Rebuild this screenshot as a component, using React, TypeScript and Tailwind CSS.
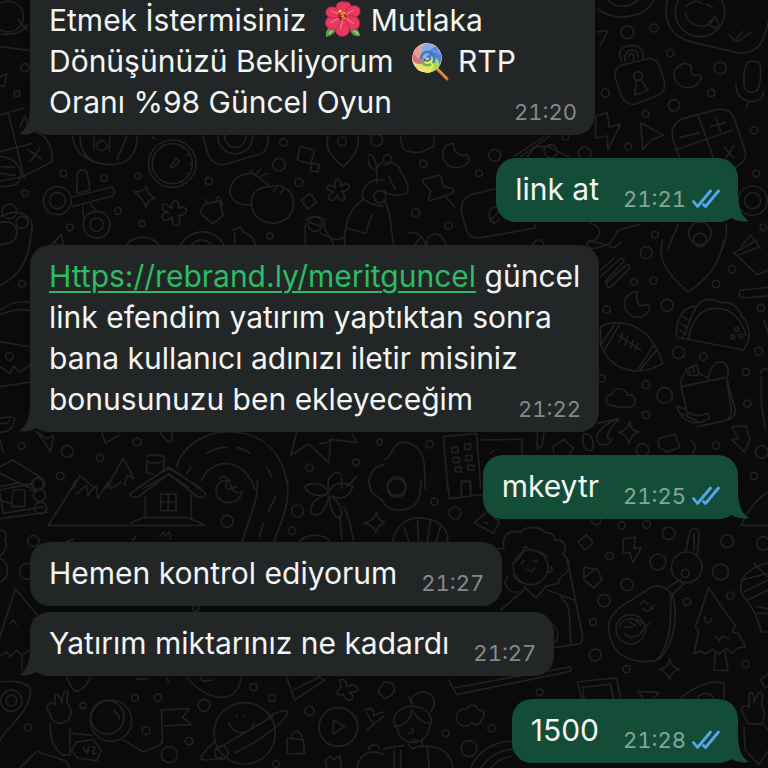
import type { ReactNode } from 'react';
import clsx from 'clsx';

// --- Types ---
interface Message {
  id: number;
  lines: ReactNode[];
  time: string;
  mine?: boolean;
  tail?: boolean;
  // continues above the top of the screen
  cut?: boolean;
  // follows a message of the same sender
  grouped?: boolean;
  width?: string;
}

// --- Emoji ---
const Hibiscus = () => (
  <svg viewBox="0 0 40 40" role="img" aria-label="hibiscus" className="inline-block w-[40px] h-[40px] mx-[8px] align-middle -mt-[4px]">
    <path d="M9 24c-5 3-7 8-6 12 4-1 9-3 10-8z" fill="#5f9a45" />
    <path d="M29 25c5 2 8 6 8 10-5 1-8-1-10-6z" fill="#5f9a45" />
    <path d="M6 33l5-6M35 33l-6-5" stroke="#b5cf83" strokeWidth="1.5" />
    <g fill="#e5395f" stroke="#b91f45" strokeWidth="0.7">
      <path d="M18 14C11 10 12 2 17 1c2-1 4 0 6 0 5 0 6 4 4 7-1 4-4 6-9 6z" />
      <path d="M20 14c3-7 9-11 14-9 4 2 4 7 1 10-4 4-10 4-15-1z" />
      <path d="M21 16c6-2 13-2 15 3 2 6-1 10-6 10-6-1-9-6-9-13z" />
      <path d="M19 17c5 3 9 9 7 14-2 5-9 6-12 2-4-5-1-12 5-16z" />
      <path d="M18 16c0 7-4 13-9 13-5-1-8-6-6-10 2-5 9-5 15-3z" />
      <path d="M18 15C12 18 5 18 3 13c-1-5 3-8 7-7 4 0 7 4 8 9z" />
    </g>
    <path d="M20 18l-3 10M23 17l8 6M22 14l9-5M16 17l-9 5M16 13L8 10" stroke="#f7708a" strokeWidth="1.3" fill="none" />
    <circle cx="19" cy="15" r="4" fill="#a5173a" />
    <path d="M21 18l-3-7" stroke="#f4b83f" strokeWidth="3" strokeDasharray="1.5 0.8" />
    <circle cx="17" cy="10" r="1.6" fill="#f9c64c" />
    <circle cx="21" cy="12" r="1.3" fill="#f2a23a" />
  </svg>
);

// candy arms, one for each eighth of the disc
const candy = ['#5b86dc', '#4f7fd8', '#a9d957', '#e4ec52', '#e9e06a', '#d96f86', '#e59a8c', '#86a9e8'];

const Lollipop = () => (
  <svg viewBox="0 0 40 40" role="img" aria-label="lollipop" className="inline-block w-[40px] h-[40px] mx-[8px] align-middle -mt-[4px]">
    <path d="M26 26l11 11" stroke="#c9702f" strokeWidth="3" strokeLinecap="round" />
    <path d="M26 25l11 11" stroke="#f0a25a" strokeWidth="1.2" strokeLinecap="round" />
    <clipPath id="candy-disc">
      <circle cx="17" cy="16" r="15" />
    </clipPath>
    <g clipPath="url(#candy-disc)">
      <g transform="translate(17 16)">
        <circle r="15" fill="#d9c36a" />
        {candy.map((color, i) => (
          <path
            key={i}
            d="M0 0C2-7 10-9 15-2L12 12C12 4 6-1 0 0z"
            transform={`rotate(${i * 45 - 45})`}
            fill={color}
            stroke="#f1efd8"
            strokeOpacity="0.55"
            strokeWidth="0.6"
          />
        ))}
        <path d="M-6 1c0-5 4-8 8-7 5 1 7 7 4 11" stroke="#3f78cf" strokeWidth="2.4" fill="none" />
        <path d="M-6 1c0 5 6 8 10 5" stroke="#6fb04c" strokeWidth="2.4" fill="none" />
        <path d="M0 0c1-3 4-1 3 1-1 3-6 2-6-1" stroke="#3566b5" strokeWidth="1.6" fill="none" />
      </g>
    </g>
  </svg>
);

// --- Dummy Data ---
const messages: Message[] = [
  {
    id: 1,
    lines: [
      <>Etmek İstermisiniz <Hibiscus />Mutlaka</>,
      <>Dönüşünüzü Bekliyorum <Lollipop />RTP</>,
      'Oranı %98 Güncel Oyun',
    ],
    time: '21:20',
    tail: true,
    cut: true,
    width: 'w-[565px]',
  },
  { id: 2, lines: ['link at'], time: '21:21', mine: true, tail: true },
  {
    id: 3,
    lines: [
      <>
        <a href="https://rebrand.ly/meritguncel" className="text-[#2dbb63] underline decoration-2 underline-offset-4">Https://rebrand.ly/meritguncel</a> güncel
      </>,
      'link efendim yatırım yaptıktan sonra',
      'bana kullanıcı adınızı iletir misiniz',
      'bonusunuzu ben ekleyeceğim',
    ],
    time: '21:22',
    tail: true,
    width: 'w-[569px]',
  },
  { id: 4, lines: ['mkeytr'], time: '21:25', mine: true, tail: true },
  { id: 5, lines: ['Hemen kontrol ediyorum'], time: '21:27' },
  { id: 6, lines: ['Yatırım miktarınız ne kadardı'], time: '21:27', tail: true, grouped: true },
  { id: 7, lines: ['1500'], time: '21:28', mine: true, tail: true },
];

// --- Wallpaper ---
interface Tile {
  x: number;
  y: number;
  dots: number[][];
  paths: string[];
}

// every tile is drawn on a 3x grid, dots are [cx, cy, r]
const tiles: Tile[] = [
  {
    x: 0,
    y: 0,
    dots: [
      [75, 203, 12], [51, 281, 9], [190, 520, 10], [312, 535, 10], [414, 528, 9], [75, 580, 10], [354, 633, 10], [209, 682, 10],
      [426, 671, 9], [837, 494, 19], [850, 427, 11], [897, 547, 12], [627, 543, 11], [809, 708, 9], [172, 602, 42], [172, 602, 24],
      [290, 674, 40], [290, 674, 20], [517, 491, 71], [517, 491, 60], [706, 410, 52], [706, 410, 32], [306, 437, 15], [1026, 424, 13],
      [28, 634, 22], [66, 667, 18], [1130, 420, 18], [24, 50, 46], [1140, 590, 18], [945, 672, 22],
    ],
    paths: [
      'M0 102c40 4 70-6 82-28M55 60l26 30M0 140l92 12M0 230l20-8-8 38-12-4',
      'M0 345l70-20M25 340l48 195M0 455l95-24M100 395c40 5 60 50 56 90l-90 46-66 12M85 450l38 26M120 445l-30 40',
      'M0 470c40 0 66 30 62 60s-30 28-62 30M4 500l40 2M0 520l46 6',
      'M0 650c60-30 100 0 96 36l-10 64M0 668c30-8 52 4 50 32s-20 30-50 34',
      'M218 408c4 60 60 86 118 86 50 0 76-36 76-86M240 410c2 40 14 60 36 70M282 410v40M330 410l-2 44M350 480l30-70',
      'M232 520c8-14 26-16 30 0l8 50-40 10zM214 592l118-30c14 0 14 22 4 26l-118 32M248 620l4 40M270 612l22 24',
      'M510 500l18-24 10 8-20 20zM545 440l6 4M560 465l6 2M568 492h8M560 520l6 4M540 545l6 4',
      'M608 408l18 60c10 20 30 30 54 24l100-30c18-6 26-28 24-54',
      'M900 440l44 10-12 42-40-12zM936 490l22 4-4 22-22-4zM984 408c-10 40 10 62 46 92 30-30 50-50 44-92',
      'M402 574c20 4 32-4 38-14 2 20 10 30 26 34-18 4-26 14-28 28-6-18-14-32-36-48z',
      'M520 604c10-8 20 4 14 20 14-6 30 0 24 14-6 10-18 8-24 8 10 12 8 30-6 32-12 0-10-18-12-28-10 12-26 16-30 2-2-12 10-16 20-14-14-4-22-12-18-22 8-8 20 0 26 10 0-8 2-16 6-22z',
      'M612 614l46-12 12 44-32 26-38-34zM622 610l-6-12M650 602c-4-10 8-14 12-4l6 16',
      'M760 520c-40 0-70 20-70 56 4 30 30 42 62 38M756 590c-10 50 20 76 66 80 40-4 62-30 58-70-8-36-40-50-66-40-32 0-50 12-58 30zM745 520l14-12M765 525l18-18M780 530l22-10M810 560c-20-20-34-26-50-40M820 575l10-14M840 580l12-14',
      'M1008 540c10-8 16 4 14 20 12-12 28-10 26 2-4 8-14 12-24 12 10 8 14 22 4 28-10 0-14-10-16-18-6 14-16 22-24 14-4-10 4-18 14-24-14 0-22-6-20-14 6-8 18-2 24 4-2-8-2-18 2-24z',
      'M904 600l26-20 20 26-26 22z',
      'M1105 470c10-18 22 10 26 36 10-20 20-24 21-18M1104 480c2 20 14 30 26 30v38M1152 540c-40-6-70 20-64 54 20 20 40 20 64 26M1088 600c-30 20-46 50-50 84l60 16c4-20 12-40 18-56M1036 688c-4 24-4 40 2 58M960 700l50 20 26-10',
      'M916 660c2-12 56-12 58 0v28l20 30c6 10 6 20 4 30M916 672v76M930 668l30 10M140 750l44-46 6 36M160 726l24 12',
      'M375 742c20-40 86-40 106 0M536 742c40-64 110-60 140 0M570 742c20-30 50-30 70 0M700 690l20-10 12 18c30 10 34 30 34 50M704 700v44',
      'M60 380l14-32 10 30M455 412l10 4',
    ],
  },
  {
    x: 384,
    y: 0,
    dots: [
      [810, 84, 12], [730, 97, 19], [859, 159, 11], [1009, 204, 18], [664, 279, 12], [870, 316, 17], [785, 341, 10], [981, 279, 11],
      [1110, 391, 11], [733, 440, 10], [332, 466, 18], [118, 491, 11], [602, 460, 19], [285, 520, 10], [95, 638, 12], [193, 677, 11],
      [1117, 520, 10], [1106, 602, 44], [1106, 602, 24], [1138, 682, 10], [813, 704, 10], [948, 700, 34], [948, 36, 74],
      [762, 228, 13], [500, 454, 20], [10, 476, 12], [545, 410, 10],
    ],
    paths: [
      'M640 26c50 40 140 30 170-26M672 0c20 24 60 26 90 0',
      'M850 0c-14 70 10 110 80 128l130 30c50 6 80-20 92-90M905 20c20-20 40-20 50-8M965 12l20 10M905 40c10 50 80 50 86 10M975 66l20-14 10 24c-10 14-26 6-30-10zM1036 105l16 18 24-28M1056 120l6 4 40-28',
      'M640 96l32-4-24 46',
      'M712 184c-14-30 0-46 30-48 30 0 36 16 36 40M724 184c-4-22 4-32 18-34 14 0 20 8 20 22M735 170c0-10 14-14 14-4v18',
      'M712 196l80-20c20-2 30 8 36 24l14 50c2 20-6 32-26 38l-60 24c-24 4-36-8-42-22l-20-56c-4-20 4-32 18-38zM758 240l-6 46 40-16-24-34',
      'M904 190c-30 6-40 30-30 50 14 30 60 34 80-8l-10-8c-14 8-28 0-22-26z',
      'M1090 188c6-6 30-4 36 0 8 20 4 60-4 80-10 14-34 10-40-2-6-20-2-58 8-78zM1056 250c0 40 20 54 50 54 20 0 30-14 34-26M1094 306l-6 14',
      'M636 348l34-10 6 44 34-10-38 76-2-40-36 6zM770 368l68 38-36 14-26 28z',
      'M870 380c6-16 20-22 40-28l90-24c30-4 44 8 52 30l32 96c4 20-10 40-30 48M870 380c-10 14-8 30 2 54l14 36M943 348l44 122M874 450l172-60M890 412l56-14M980 380l44-12M996 352l14 42M1020 440l30 34M1050 438l-26 40',
      'M390 470l90-60M410 470l86-60M430 470l24-30h40l60 30M50 410l4 30c10 16 30 20 60 16l36-18v-28',
      'M208 430c-30 4-36 24-30 46 14 34 62 36 78 4l-6-16c-18 8-42-4-42-34z',
      'M150 530c14-8 26-4 22 8l6 22 26 6c10 6 4 14-4 16l-54 18c-12 4-16-4-10-10l4-18-20-22c-8-10 0-14 8-14zM184 590l28 30',
      'M0 496l24-8 20 12c10 30 30 40 28 70 0 20-60 20-72 0M14 530l20 40',
      'M346 564l-76 18c-30 8-42 30-36 60l14 50c8 20 24 26 50 20l156-28v-12M346 620c-30 0-36 20-26 40l30-30M346 660c-16 14-28 10-30-8',
      'M0 600c20 30 20 80 30 146M76 700c20-10 44 10 50 40M130 740c-6-40 30-50 50-20l10 24M90 740l20-30M445 735c10-20 30-20 36 0',
      'M620 670c40 10 34 50-12 60 0 20 30 20 70 0l26-40 60-16M882 674l-30 72M1026 670c4 30-2 60-10 76M1070 740l30-34 30 40',
    ],
  },
  {
    x: 0,
    y: 240,
    dots: [
      [66, 131, 10], [28, 350, 11], [64, 618, 10], [202, 634, 18], [300, 654, 11], [411, 606, 12], [181, 708, 11], [1068, 667, 10],
      [929, 683, 11], [116, 730, 18],
    ],
    paths: [
      'M92 0c-10 70-40 110-92 136M0 210c30-20 60-30 92-22M0 225c30-14 60-20 90-14M0 305l92 16M0 380l28 20 14-22 16 20 30-22M0 440l92-14M0 535c20-6 40-4 44 0-4 34-20 40-44 42M0 550c14 4 24-2 30-10M0 600l10 40',
      'M110 576l30 20 20-10-8 50-18-30zM306 578l10 32 40-24M480 578l20 24c16 14 18-10 16-24',
      'M0 680l38-20 90 56M0 700l90 44M0 740l60-12',
      'M530 680c20-70 100-110 170-104 90 6 150 60 164 170M605 720c30-70 130-70 160 30M560 700c6-6 10-14 12-20M620 640c20-14 40-18 60-18M710 622c20 4 30 10 40 18M800 680l14 30M660 720c0-20 30-10 20 10s10 20 30 10',
      'M410 744l96-60 96 60M430 746l76-44 60 40M440 650c0-8 54-8 54 6s-54 18-54 6v36l20 4M440 670v28M494 664l-4 20',
      'M320 746l50-92 32 62-20-10-8 30M220 746l20-40 40 36',
      'M890 578l-18 68 54-34 60 56 6-70 80 10-16-28M960 610c14 2 24-2 34-12M1130 610c0-14 14-20 16-6s-10 14-16 6zM1110 740c-10-30 10-60 42-66M985 746c-6-40 26-60 40-40v40M1040 740l30-30',
    ],
  },
  {
    x: 384,
    y: 240,
    dots: [
      [787, 38, 18], [1044, 88, 11], [996, 132, 11], [750, 125, 10], [808, 122, 11], [849, 196, 18], [668, 208, 11], [1131, 204, 11],
      [884, 338, 18], [958, 350, 11], [1124, 334, 12], [1086, 396, 11], [786, 434, 12], [842, 466, 23], [1090, 491, 11], [786, 525, 11],
      [652, 416, 11], [996, 617, 11], [1133, 636, 19], [137, 613, 11], [1110, 708, 11], [776, 630, 19], [38, 738, 28], [948, 0, 20],
      [1058, 268, 6], [1046, 290, 6], [1070, 288, 6],
    ],
    paths: [
      'M836 0c-14 50 0 90 76 156 60-40 100-90 106-156',
      'M1050 38l70-38M1050 38l70 66 32-14M1066 44l60-24M1070 150l82-8M1070 150c-10 12-2 22 10 24l72-6M1140 240l12 40',
      'M650 110l60-54c8-4 12 4 8 10l-56 60M670 126l56-50c10-4 14 4 10 10l-54 54c-12 6-18-4-12-14M650 90l40-36M610 0l40 10 40 14 20-16',
      'M760 155c-36 4-44 30-36 50 20 40 64 34 74-4l-8-8c-26 12-36-4-30-38z',
      'M650 258c60-24 150-8 186 112-60 40-160 30-186-60zM690 256l-40 60M706 254l-44 76M818 330l-48 58M808 316l-44 70M704 286l66 44M716 280l-10 26M732 288l-10 28M748 300l-8 24M762 310l-8 20',
      'M878 290c-6-60 30-96 60-90 14-26 50-26 70-12 40-6 60 20 66 44 20 10 22 40 20 70l-14 28-190-36c-10 0-12-2-12-4zM912 300c10-60 40-100 90-94 40 0 70 30 84 80M896 290c14-10 20-60 40-86M886 270l20 14M890 250l20 14M896 230l20 12',
      'M904 390l34-16 8 28c-6 4-30 8-34 0zM914 384l4 14M926 380l4 16M900 402c-10 20-10 20-8 40l20 90M892 440l136-28 14 100c0 20-10 28-26 32l-76 16M946 402l26 10M972 418c4-40 30-60 48-50 14 10 16 30 8 46l26 96c0 24-20 30-40 34M880 500c10 50 60 60 98 34l-6-14c-30 14-60 4-70-14zM890 520l50 24',
      'M680 496c-20-6-16-34 4-32 6-26 44-20 46 2 20-6 30 16 18 32-20 6-50 4-68-2z',
      'M738 544c0 20 8 28 28 32-20 6-28 14-30 36-8-20-14-30-32-34 20-6 28-14 34-34z',
      'M704 536c-40 14-70 40-66 64 10 24 40 14 46-2-20 4-20-20 20-60M600 580c-10 20 0 60 24 50 10-20 0-50-24-50zM640 550l60-14',
      'M824 596l48-14 16 40-40 14-24-16zM506 620l32-22 30 26-10 18M510 640l-4-20M920 600c16 10 16 30 6 40M1046 560l40-2 12 40-16 38-38-36 20-4-20-34',
      'M178 590l14 160M178 590l100-10 12 166M290 600l124-2v44M320 640l10-8M204 622h18v16h-18zM242 612h18v16h-18zM208 652h18v16h-18zM246 646h18v16h-18zM214 682h18v14h-18zM252 676h18v14h-18zM234 724h24v24',
      'M0 660c30-10 20-60 70-52 60 20 50 60 54 140M460 578v50l14-10 6-40M1130 400c0-16 14-16 22-10M1132 410v80l12 80',
    ],
  },
  {
    x: 0,
    y: 480,
    dots: [
      [682, 124, 18], [893, 93, 18], [876, 152, 11], [100, 183, 17], [82, 274, 24], [587, 385, 9], [405, 653, 10], [473, 653, 11],
      [612, 676, 18], [249, 677, 9], [84, 743, 11], [438, 752, 12], [567, 783, 11], [760, 621, 11], [816, 654, 11], [929, 693, 14],
      [664, 818, 20], [34, 662, 32], [34, 662, 16], [333, 722, 62], [322, 712, 50], [734, 760, 92], [1015, 741, 58], [828, 852, 10],
      [508, 824, 24], [118, 46, 18], [122, 84, 18], [112, 12, 18],
    ],
    paths: [
      'M0 30l100-20M0 40l10 60 120-20M40 30h34v50h-40zM90 30l20 4M0 116l144-20M0 60l30 10M144 136c40-60 60-90 84-136M144 136l470 0M390 130l40-18h130l50 20M230 40l30-24 4 30 24-30 6 40 30-50 10 20 30-20',
      'M390 42l116-82 112 80c-4 12-16 16-28 8l-84-66-88 66c-14 6-26 4-28-6zM436 50v66M574 44v72M482 42h46v50h-46zM505 42v50M482 66h46',
      'M690 0c-36 0-50 24-38 48 14 30 66 26 74-12-20 8-36-6-36-36zM772 0c6 60-30 120-44 184M862 0c10 70-20 130-40 184M826 50l-20 44M790 130l-12 40',
      'M984 40c-10-40-60-30-70-20 10 26 40 30 70 22-40 10-60 40-48 60 24 10 40-10 52-56 0 30 10 60 30 70 16-20 0-50-24-68 30 14 60 0 64-30-30-16-60-10-74 22zM1020 110l6 70M1030 80c20 30 24 70 30 100M900 184c20-24 70-24 90 0M1130 96c2 20 10 28 24 30M1130 96c-6 20-16 26-38 34 20 4 32 10 36 28 4-16 10-26 24-28M1105 0l10 36 37 30',
      'M0 150c20 0 20 20 14 30 10 10 6 30-14 50M0 236c30 10 30 60 0 70M480 170l10-14 6 12 12-12 4 20M200 184l20-6M400 180l6-10',
      'M0 470l46-144 70 84-20 10M30 430l10-10 10 14M0 528l20-12 10 14 20-20 16 16 20-14M66 530v40',
      'M0 606c40-6 80 0 92 20 0 60-50 100-76 130l-16 24M200 594c10 20 20 40 34 40 20-10 34-30 36-42',
      'M150 700c-20-20 0-40 16-26-6-30 4-40 14-20l6 14c0-30 12-40 18-34l-4 36c14 10 18 30 6 50l-24 10c-20 0-28-10-32-30zM150 730c0 60 20 84 40 96l20-2v-80M216 760l60 6M60 864l50-50 90 30 8 20M370 780l60 36 50-20 8-20',
      'M482 690l86-4-20 26 26 22-80 4M484 690l4 100M230 786l50-8 24 34-14 30-58-8-18-24zM250 800l4 14 14-2M266 798l-4 22M276 802c10-4 12 4 4 10l-2 10 12-2M340 690c10 8 16 14 18 26M1000 720v42l34-22z',
      'M688 728c10 40 66 40 74 0M710 706v6M732 702v6M806 710c20-14 50-20 58-16-4 30-100 100-160 124M644 786c-24 20-44 44-40 52 20 6 40 0 60-6M650 808l170-100',
      'M862 774l48 6 4 40-52 2zM874 774c0-24 30-30 32 4M560 592c60 70 150 90 164 0M600 592l8 12 30-4M860 592l24 68 90-60-20-10M880 630l80-40M410 598l30-2M500 596l6 10',
      'M1020 600c16-6 20 10 20 20 20-10 30-4 34 8-6 10-16 10-26 8 14 10 14 20 0 26-10-4-16-14-18-20-14 8-24-2-16-10l10-12zM1150 610c-20 20-20 30 0 40M1096 690c20-10 30 0 24 16l30-10M1100 750l50-40M1100 700l20 30M976 840l16-10 8 10 20-12 4 36M980 864l-4-24M1072 864c4-40 40-60 80-40M1106 810c0-20 30-20 32-4',
    ],
  },
  {
    x: 384,
    y: 480,
    dots: [
      [151, 65, 11], [213, 99, 18], [713, 136, 11], [788, 134, 11], [854, 160, 19], [1030, 184, 19], [1138, 190, 20], [677, 228, 11],
      [822, 246, 24], [1010, 276, 24], [729, 314, 18], [1039, 347, 11], [660, 362, 18], [909, 365, 11], [627, 426, 10], [634, 525, 18],
      [728, 567, 11], [1085, 552, 11], [467, 637, 10], [185, 760, 10], [323, 745, 11], [255, 806, 24], [740, 448, 44], [440, 262, 52],
      [637, 120, 14], [38, 24, 28], [908, 262, 46], [904, 280, 12],
    ],
    paths: [
      'M0 70c20 30 90 30 106-20l6-50M190 0l6 56 110-14M232 48V4h28v40M270 128l40-34 36 32-18 34zM300 126l10 4',
      'M26 184c10-60 60-80 110-66 40 8 60 40 54 68M60 140l14 44M100 120l4 64M140 118l-10 66M170 140l-14 44',
      'M340 206l20 0c-10-40 20-60 50-48 10-20 60-20 74 0 20-2 30 10 28 24 30-10 40 30 24 40 30 20 20 60-4 66l-10 22-40 10M372 290c-20 20 0 50 30 46M386 250c20-10 30-30 36-50 30 20 50 10 70 30M412 250l8-8M450 246l10-6M424 268l20 6 8-10M420 320l36 34 30-34M420 330l-70 60M490 330l80 30M530 350c20 20 26 40 26 54M550 240l46 230c0 20-4 20-20 24l-80 10M556 400l4 90M496 430c34 10 34 60 0 66M386 286l24 22M500 260c10 10 0 20-10 16',
      'M582 186l26-22 20 24-24 22zM600 262l40 6 14 30-24 26-30-24zM604 290l30-24M718 176l36-4-4 34 22-2-26 44-8-30h-20z',
      'M904 214c10-20 6-40 14-60 10-12 24-8 28 4l-6 66M930 160v50M890 298l-38 24M900 310l-40 40',
      'M790 330c20-20 50-14 66 6 10 20 2 40 4 60 0 60-10 110-44 146-60 10-120-10-134-60-20-50-4-80 40-110 30-16 40-26 68-42zM864 340c20 60 10 150-40 200M706 440c6-30 50-30 70-10M770 370c10-10 16-8 22 4M800 384l12-8M776 386c10 10 20 8 30 0M736 424l20 14M750 416l20 20M720 460c20 20 50 10 56-10l20-20M720 440l26 2',
      'M974 324l-40 118 10 14-14 66 20-8 16 8 20-14 20 14 20-16 20 14 14-16 24-4-20-40-20-4 10-20-30-40zM962 410c0 20 16 26 20 6M994 468l12 14 10-14 18 8M994 520l-4 50 42 2-8-54',
      'M1152 250c-60 10-90 50-80 90 20 30 40 40 60 116h20M1152 280l-80 20M1152 300l-74 36M1152 330l-60 30M1110 250l40 40M1120 380l32 6M1120 400h32',
      'M858 534c0 20 10 30 30 34-20 4-30 12-32 32-4-18-12-26-30-32 20-4 28-12 32-34z',
      'M194 600l24 44 340-70c6-8 0-16-6-12l-80 14M210 624l270-50M580 606l110-12c8 0 10 6 10 12l10 52M580 606l14 50M600 656l-4-34 84-10 8 44M760 634l66 4-20 20M766 640l10 14M890 656c30-30 90-60 130-46v46M940 656c10-20 40-20 50 0M1130 600l22-20M1130 600l10 20h12',
      'M1072 136c20-50 50-80 80-100M1072 136h80',
      'M0 606c40-4 44 40 0 50M74 652l14 20M80 668c0-20 20-34 44-32 30 10 34 40 16 60M30 724c0-60 110-60 112 0l-12 40c-20 30-60 30-82 4zM30 740c30 0 50-20 54-50 10 20 30 40 56 40M70 786l14 20 30-10v-20M0 806l60-10M110 800c60-6 90 20 96 60M30 810v54M50 810v54M130 806l6 58M74 760l14-4-4-12M84 780h16',
      'M224 730c-16-20 0-50 24-42 10-20 30-14 34 2 20-4 24 20 10 30-6 20-20 16-30 8-10 16-30 12-38 2z',
      'M260 864c20-50 70-80 120-80M290 864c20-30 50-54 96-56M320 864c20-20 30-30 60-34',
      'M1076 700c-10-20 10-30 20-16v-40c6-14 16-4 14 24l14-30c10-4 16 4 8 36 14 20 10 40 0 60l-40-4zM1080 740l4 70 40 44 28-40M1136 730l16 20',
    ],
  },
];

const Wallpaper = () => (
  <svg
    viewBox="0 0 768 768"
    preserveAspectRatio="xMidYMid slice"
    aria-hidden="true"
    className="absolute inset-0 w-full h-full pointer-events-none"
  >
    {tiles.map((tile) => (
      <g
        key={`${tile.x}-${tile.y}`}
        transform={`translate(${tile.x} ${tile.y}) scale(0.3333)`}
        fill="none"
        stroke="#212121"
        strokeWidth="5"
        strokeLinecap="round"
        strokeLinejoin="round"
      >
        {tile.dots.map(([cx, cy, r], i) => (
          <circle key={i} cx={cx} cy={cy} r={r} />
        ))}
        {tile.paths.map((d, i) => (
          <path key={i} d={d} />
        ))}
      </g>
    ))}
  </svg>
);

// --- Bubble parts ---
const ReadTicks = () => (
  <svg viewBox="0 0 28 20" fill="none" stroke="#57a5ec" strokeWidth="2.8" strokeLinecap="round" strokeLinejoin="round" role="img" aria-label="read" className="w-[28px] h-[20px] ml-[6px]">
    <path d="M1.500 12.500L5.500 17.500 18.500 2" />
    <path d="M11.500 15.500L13.500 17.500 26.500 2" />
  </svg>
);

const Tail = ({ mine }: { mine?: boolean }) => (
  <svg
    viewBox="0 0 32 28"
    aria-hidden="true"
    className={clsx('absolute bottom-0 w-[32px] h-[28px]', mine ? '-right-[11px] fill-[#144d37]' : '-left-[11px] -scale-x-100 fill-[#222627]')}
  >
    <path d="M21 0c0 13 3 22 11 27-6 1-12 0-18-3-4 3-9 4-14 4V0z" />
  </svg>
);

const Bubble = ({ message }: { message: Message }) => {
  const { lines, time, mine, tail, cut, grouped, width } = message;
  const last = lines.length - 1;

  return (
    <li className={clsx('flex', mine && 'justify-end', !cut && (grouped ? 'mt-[6px]' : 'mt-[23px]'))}>
      <div
        className={clsx(
          'relative max-w-full pl-[19px] pr-[18px] pb-[12px]',
          mine ? 'bg-[#144d37]' : 'bg-[#222627]',
          cut ? 'rounded-b-[20px]' : 'rounded-[20px] pt-[11px]',
          width,
        )}
      >
        {tail && <Tail mine={mine} />}
        {lines.slice(0, last).map((line, i) => (
          <p key={i} className="relative h-[41px] whitespace-nowrap">{line}</p>
        ))}
        <div className="relative flex justify-between gap-[24px]">
          <p className="whitespace-nowrap">{lines[last]}</p>
          <div className={clsx('flex items-center self-end h-[22px] text-[22px] leading-[22px] tabular-nums', mine ? 'text-[#84a598]' : 'text-[#868889]')}>
            <time>{time}</time>
            {mine && <ReadTicks />}
          </div>
        </div>
      </div>
    </li>
  );
};

export default function App() {
  return (
    <main className="relative min-h-screen overflow-hidden bg-[#0a0a0a] font-['Inter','Noto_Sans',sans-serif] text-[30px] leading-[41px] text-[#f3f4f4]">
      <Wallpaper />
      <ul className="relative px-[30px] pb-[4px]">
        {messages.map((message) => (
          <Bubble key={message.id} message={message} />
        ))}
      </ul>
    </main>
  );
}
